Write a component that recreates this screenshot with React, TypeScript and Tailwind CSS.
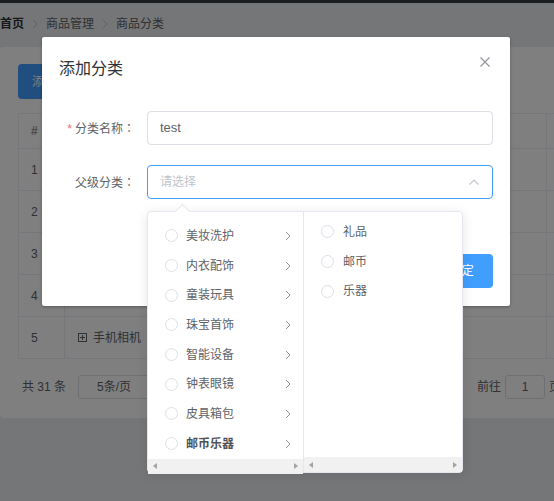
import React from "react";

const leftItems = ["美妆洗护", "内衣配饰", "童装玩具", "珠宝首饰", "智能设备", "钟表眼镜", "皮具箱包", "邮币乐器"];
const rightItems = ["礼品", "邮币", "乐器"];

function Chevron() {
  return (
    <svg width="6" height="10" viewBox="0 0 6 10" className="flex-none">
      <path d="M1 1 L5 5 L1 9" fill="none" stroke="#8d939c" strokeWidth="1" />
    </svg>
  );
}

function Radio() {
  return <span className="w-[13px] h-[13px] rounded-full border border-[#dcdfe6] bg-white flex-none" />;
}

function ScrollBar() {
  return (
    <div className="h-[15px] bg-[#f1f1f1] flex items-center justify-between px-[5px] flex-none">
      <svg width="4" height="6" viewBox="0 0 4 6"><path d="M4 0 L0 3 L4 6 Z" fill="#a3a3a3" /></svg>
      <svg width="4" height="6" viewBox="0 0 4 6"><path d="M0 0 L4 3 L0 6 Z" fill="#a3a3a3" /></svg>
    </div>
  );
}

function Sep() {
  return (
    <svg width="6" height="10" viewBox="0 0 6 10" className="flex-none">
      <path d="M1 1 L5 5 L1 9" fill="none" stroke="#c0c4cc" strokeWidth="1" />
    </svg>
  );
}

export default function App() {
  const rows = [1, 2, 3, 4, 5];
  return (
    <div className="relative w-[554px] h-[501px] overflow-hidden bg-[#eaedf1] font-['Liberation_Sans','Noto_Sans_CJK_SC',sans-serif] text-[12px] text-[#606266]">
      {/* page header */}
      <div className="h-[3px] bg-[#373d41]" />
      {/* breadcrumb */}
      <div className="h-[44px] flex items-center gap-[8px] text-[12px] pb-[2px]">
        <span className="font-bold text-[#303133]">首页</span>
        <Sep />
        <span>商品管理</span>
        <Sep />
        <span>商品分类</span>
      </div>
      {/* card */}
      <div className="w-[620px] h-[371px] bg-white rounded-[4px] pt-[17px] px-[18px]">
        <div className="w-[76px] h-[35px] bg-[#409eff] rounded-[4px] text-white flex items-center justify-center text-[12px]">添加分类</div>
        <div className="mt-[14px] border-t border-l border-[#ebeef5] w-[600px]">
          <div className="flex h-[35px] border-b border-[#ebeef5] font-bold text-[#909399]">
            <div className="w-[46px] border-r border-[#ebeef5] flex items-center pl-[12px]">#</div>
            <div className="w-[482px] border-r border-[#ebeef5] flex items-center pl-[12px]">分类名称</div>
            <div className="flex-1" />
          </div>
          {rows.map((r) => (
            <div key={r} className="flex h-[42px] border-b border-[#ebeef5]">
              <div className="w-[46px] border-r border-[#ebeef5] flex items-center pl-[12px]">{r}</div>
              <div className="w-[482px] border-r border-[#ebeef5] flex items-center pl-[13px] gap-[6px]">
                {r === 5 && (
                  <>
                    <svg width="9" height="9" viewBox="0 0 9 9">
                      <rect x="0.5" y="0.5" width="8" height="8" fill="none" stroke="#606266" />
                      <path d="M2 4.5 H7 M4.5 2 V7" stroke="#606266" />
                    </svg>
                    <span>手机相机</span>
                  </>
                )}
              </div>
              <div className="flex-1" />
            </div>
          ))}
        </div>
        <div className="mt-[16px] flex items-center h-[24px]">
          <span className="ml-[4px] w-[56px]">共 31 条</span>
          <div className="w-[86px] h-[24px] border border-[#dcdfe6] rounded-[3px] flex items-center pl-[18px]">5条/页</div>
          <div className="w-[313px] flex-none" />
          <span>前往</span>
          <div className="ml-[4px] w-[40px] h-[24px] border border-[#dcdfe6] rounded-[3px] flex items-center justify-center">1</div>
          <span className="ml-[4px]">页</span>
        </div>
      </div>

      {/* overlay */}
      <div className="absolute inset-0 bg-black/50" />

      {/* dialog */}
      <div className="absolute left-[42px] top-[37px] w-[468px] h-[269px] bg-white rounded-[2px] shadow-[0_1px_3px_rgba(0,0,0,0.3)]">
        <div className="relative h-[60px] px-[17px] flex items-center pt-[3px]">
          <span className="text-[16px] text-[#303133]">添加分类</span>
          <svg className="absolute left-[438px] top-[20px]" width="10" height="10" viewBox="0 0 10 10">
            <path d="M0.5 0.5 L9.5 9.5 M9.5 0.5 L0.5 9.5" stroke="#909399" strokeWidth="1.1" />
          </svg>
        </div>
        <div className="pt-[14px] px-[17px]">
          <div className="flex items-center h-[34px]">
            <div className="w-[88px] pr-[12px] text-right text-[12px] text-[#606266]">
              <span className="text-[#f56c6c] mr-[3px]">*</span>分类名称<span className="font-['Noto_Sans_CJK_JP',sans-serif]">：</span>
            </div>
            <div className="flex-1 h-[34px] border border-[#dcdfe6] rounded-[4px] flex items-center px-[12px] text-[13px] text-[#606266]">test</div>
          </div>
          <div className="flex items-center h-[34px] mt-[20px]">
            <div className="w-[88px] pr-[12px] text-right text-[12px] text-[#606266]">
              父级分类<span className="font-['Noto_Sans_CJK_JP',sans-serif]">：</span>
            </div>
            <div className="flex-1 h-[34px] border border-[#409eff] rounded-[4px] flex items-center justify-between px-[12px] text-[12px] text-[#c0c4cc]">
              <span>请选择</span>
              <svg width="10" height="6" viewBox="0 0 10 6" className="mr-[1px]">
                <path d="M0.5 5.5 L5 1 L9.5 5.5" fill="none" stroke="#c0c4cc" strokeWidth="1.1" />
              </svg>
            </div>
          </div>
        </div>
        <div className="mt-[55px] px-[17px] flex justify-end gap-[10px]">
          <div className="w-[64px] h-[34px] border border-[#dcdfe6] rounded-[4px] flex items-center justify-center">取 消</div>
          <div className="w-[66px] h-[34px] bg-[#409eff] rounded-[4px] text-white flex items-center justify-center text-[12px]">确 定</div>
        </div>
      </div>

      {/* cascader dropdown */}
      <div className="absolute left-[147px] top-[211px] w-[316px] h-[262px] bg-white border border-[#e4e7ed] rounded-[4px] shadow-[0_2px_12px_rgba(0,0,0,0.1)] flex">
        <div className="absolute left-[29px] top-[-6px] w-[11px] h-[11px] bg-white border-t border-l border-[#e4e7ed] rotate-45" />
        <div className="w-[156px] border-r border-[#e4e7ed] flex flex-col">
          <div className="flex-1 pt-[9px]">
            {leftItems.map((t, i) => (
              <div key={t} className="h-[29.7px] flex items-center pl-[17px] pr-[12px]">
                <Radio />
                <span className={"ml-[8px] flex-1 " + (i === 7 ? "font-bold text-[#505257]" : "")}>{t}</span>
                <Chevron />
              </div>
            ))}
          </div>
          <ScrollBar />
        </div>
        <div className="flex-1 flex flex-col">
          <div className="flex-1 pt-[5px]">
            {rightItems.map((t) => (
              <div key={t} className="h-[29.7px] flex items-center pl-[17px]">
                <Radio />
                <span className="ml-[9px]">{t}</span>
              </div>
            ))}
          </div>
          <ScrollBar />
        </div>
      </div>
    </div>
  );
}
